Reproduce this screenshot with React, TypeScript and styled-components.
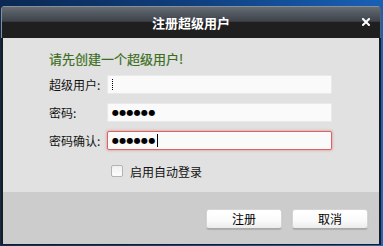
import styled, { createGlobalStyle } from 'styled-components';

const GlobalStyle = createGlobalStyle`
  html, body {
    margin: 0;
    padding: 0;
    width: 383px;
    height: 246px;
    overflow: hidden;
    background: linear-gradient(100deg, #0a2853 0%, #0f3f7e 45%, #1a68c2 100%);
    font-family: "Noto Sans CJK SC", "Liberation Sans", sans-serif;
  }
`;

const Desktop = styled.div`
  padding: 6px 2px 0 1px;
`;

const Window = styled.div`
  width: 380px;
  height: 239px;
  display: flex;
  flex-direction: column;
  box-sizing: border-box;
  border-radius: 4px 4px 0 0;
  background: #1c1c1c;
  overflow: hidden;
`;

const TitleBar = styled.div`
  height: 32px;
  flex: none;
  display: grid;
  grid-template-columns: 1fr auto 1fr;
  align-items: center;
  padding: 0 10px 0 10px;
  background: linear-gradient(
    #6a7078 0%,
    #555b63 20%,
    #3e434a 48%,
    #1f1f1f 50%,
    #1f1f1f 100%
  );
  box-shadow: inset 1px 1px 0 #8a8f96, inset -1px 0 0 #5a5f66;
`;

const Title = styled.div`
  grid-column: 2;
  color: #fff;
  font-size: 13px;
  font-weight: bold;
  line-height: 16px;
  padding-top: 2px;
`;

const Close = styled.div`
  grid-column: 3;
  justify-self: end;
  display: flex;
  width: 8px;
  height: 8px;
  margin-right: 1px;
`;

const Body = styled.div`
  flex: 1;
  display: flex;
  flex-direction: column;
  margin: 0 2px 1px 2px;
`;

const Content = styled.div`
  height: 154px;
  box-sizing: border-box;
  background: #e1e1e1;
  padding: 12px 0 0 46px;
`;

const Hint = styled.div`
  color: #3b6e20;
  font-size: 13px;
  line-height: 18px;
  height: 18px;
  -webkit-text-stroke: 0.2px #3b6e20;
`;

const Form = styled.div`
  margin-top: 7px;
  display: flex;
  flex-direction: column;
  gap: 9px;
`;

const Row = styled.div`
  display: flex;
  align-items: center;
  height: 19px;
`;

const Label = styled.div`
  width: 58px;
  color: #111;
  font-size: 12px;
  line-height: 19px;
  white-space: nowrap;
`;

const Field = styled.div<{ $error?: boolean }>`
  width: 225px;
  height: 19px;
  box-sizing: border-box;
  display: flex;
  align-items: center;
  padding-left: 4px;
  background: #fafafa;
  border: 1px solid ${(p) => (p.$error ? '#d86565' : '#e9e9e9')};
  border-radius: ${(p) => (p.$error ? '2px' : '0')};
  box-shadow: ${(p) => (p.$error ? '0 0 2px 1px rgba(230, 120, 120, 0.45)' : 'none')};
`;

const Dots = styled.span`
  font-family: "DejaVu Sans", sans-serif;
  font-size: 8px;
  letter-spacing: 0.3px;
  color: #000;
  line-height: 19px;
`;

const Caret = styled.span<{ $dotted?: boolean }>`
  display: inline-block;
  width: 0;
  height: ${(p) => (p.$dotted ? '11px' : '13px')};
  border-left: 1px ${(p) => (p.$dotted ? 'dotted' : 'solid')} #000;
  margin-left: ${(p) => (p.$dotted ? '0' : '1px')};
`;

const CheckRow = styled.label`
  margin: 15px 0 0 62px;
  display: flex;
  align-items: center;
  gap: 7px;
  font-size: 12px;
  color: #111;
  height: 12px;
`;

const Box = styled.span`
  width: 12px;
  height: 12px;
  box-sizing: border-box;
  border: 1px solid #b3b3b3;
  border-radius: 2px;
  background: linear-gradient(#f0f0f0, #fdfdfd);
`;

const Footer = styled.div`
  flex: 1;
  background: #cccccc;
  display: flex;
  justify-content: flex-end;
  align-items: flex-start;
  gap: 10px;
  padding: 17px 11px 0 0;
`;

const Button = styled.button`
  width: 76px;
  height: 20px;
  box-sizing: border-box;
  padding: 0;
  border: 1px solid #d4d4d4;
  border-bottom-color: #a9a9a9;
  border-radius: 3px;
  background: linear-gradient(#ffffff 0%, #fbfbfb 55%, #ececec 100%);
  box-shadow: 0 1px 1px rgba(0, 0, 0, 0.15);
  font-family: "Noto Sans CJK SC", "Liberation Sans", sans-serif;
  font-size: 12px;
  color: #000;
  line-height: 18px;
`;

export default function App() {
  return (
    <>
      <GlobalStyle />
      <Desktop>
        <Window>
          <TitleBar>
            <Title>注册超级用户</Title>
            <Close>
              <svg width='8' height='8' viewBox='0 0 8 8'>
                <path d='M1 1 L7 7 M7 1 L1 7' stroke='#fff' strokeWidth='2' strokeLinecap='square' />
              </svg>
            </Close>
          </TitleBar>
          <Body>
            <Content>
              <Hint>请先创建一个超级用户!</Hint>
              <Form>
                <Row>
                  <Label>超级用户:</Label>
                  <Field>
                    <Caret $dotted />
                  </Field>
                </Row>
                <Row>
                  <Label>密码:</Label>
                  <Field>
                    <Dots>●●●●●●</Dots>
                  </Field>
                </Row>
                <Row>
                  <Label>密码确认:</Label>
                  <Field $error>
                    <Dots>●●●●●●</Dots>
                    <Caret />
                  </Field>
                </Row>
              </Form>
              <CheckRow>
                <Box />
                启用自动登录
              </CheckRow>
            </Content>
            <Footer>
              <Button>注册</Button>
              <Button>取消</Button>
            </Footer>
          </Body>
        </Window>
      </Desktop>
    </>
  );
}
